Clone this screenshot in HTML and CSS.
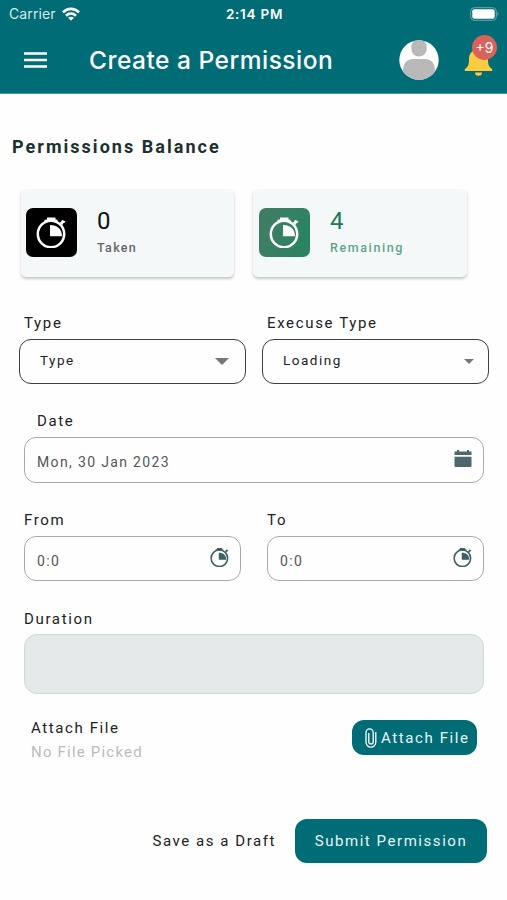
FILE: index.html
```html
<!DOCTYPE html>
<html lang="en">
<head>
<meta charset="utf-8">
<title>Create a Permission</title>
<link rel="stylesheet" href="styles.css">
</head>
<body>
<svg class="defs" aria-hidden="true">
  <symbol id="timer" viewBox="0 0 32 32">
    <circle cx="15" cy="18" r="13.200" fill="none" stroke="currentColor" stroke-width="2.500"/>
    <path d="M11 1.500h8.500v2l2 .3v2h-13v-2l2.500-.3zM23.500 6.500l1.500-.5.500-1.500 1-.5 3 1.500-.8 1.200-1.200.2-1 2zM14 9v11.300h12C26 13 21.500 9 14 9z" fill="currentColor"/>
  </symbol>
</svg>
<header class="header">
  <div class="status">
    <div class="carrier"><span>Carrier</span>
      <svg class="wifi" viewBox="0 0 18 14" fill="none" stroke="#fff" stroke-width="2.600"><path d="M1 5.300C5.500.7 12.500.7 17 5.300M4 8.700c3-2.800 7-2.800 10 0"/><path d="M9 13.700 6.100 10.800c1.700-1.500 4.100-1.500 5.800 0z" fill="#fff" stroke="none"/></svg>
    </div>
    <div class="clock">2:14 PM</div>
    <svg class="battery" viewBox="0 0 30 14"><rect x=".7" y=".7" width="25.600" height="12.600" rx="3.500" fill="none" stroke="#6da8ad" stroke-width="1"/><rect x="2.300" y="2.300" width="22.400" height="9.400" rx="2" fill="#fff"/><path d="M27.500 4.800q2 2.200 0 4.400z" fill="#6da8ad"/></svg>
  </div>
  <div class="appbar">
    <svg class="menu" viewBox="0 0 23 16"><path d="M0 1.500h23M0 8h23M0 14.500h23" stroke="#fff" stroke-width="2.400"/></svg>
    <h1>Create a Permission</h1>
    <svg class="avatar" viewBox="0 0 40 40"><defs><clipPath id="round"><circle cx="20" cy="20" r="19.700"/></clipPath></defs><g clip-path="url(#round)"><path fill="#fff" d="M0 0h40v40H0z"/><rect x="12.300" y="-1" width="15.400" height="17.500" rx="7.600" fill="#b9b9b9"/><path d="M4 32c0-8 3-13 10-13h12c7 0 10 5 10 13v8H4z" fill="#b9b9b9"/></g></svg>
    <div class="bell">
      <svg viewBox="0 0 28 32"><path d="M14 2.500a2 2 0 0 1 2 2v1c5 1 7.500 4.500 7.500 10 0 5.500 1 7.500 4.200 9.500v2H.3v-2c3.200-2 4.200-4 4.200-9.500 0-5.500 2.500-9 7.500-10v-1a2 2 0 0 1 2-2zM10.500 28.500h7a3.500 3.300 0 0 1-7 0z" fill="#fdcb3f"/></svg>
      <span class="badge">+9</span>
    </div>
  </div>
</header>
<main>
  <h2>Permissions Balance</h2>
  <section class="cards">
    <div class="card"><div class="tile"><svg><use href="#timer"/></svg></div><div class="stat"><b>0</b><span>Taken</span></div></div>
    <div class="card green"><div class="tile"><svg><use href="#timer"/></svg></div><div class="stat"><b>4</b><span>Remaining</span></div></div>
  </section>
  <section class="selects">
    <div><label>Type</label><div class="select"><span>Type</span><svg class="caret" viewBox="0 0 14 7"><path d="M0 0h14L7 7z" fill="#777"/></svg></div></div>
    <div><label>Execuse Type</label><div class="select"><span>Loading</span><svg class="caret small" viewBox="0 0 14 7"><path d="M0 0h14L7 7z" fill="#777"/></svg></div></div>
  </section>
  <section class="date">
    <label>Date</label>
    <div class="field"><span>Mon, 30 Jan 2023</span><svg class="calendar" viewBox="0 0 18 18"><path d="M3 0h2v1.500h8V0h2v1.500h2.500V5H.5V1.500H3zM.5 6.800h17V16q0 1-1 1h-15q-1 0-1-1z" fill="#4c686a"/></svg></div>
  </section>
  <section class="times">
    <div><label>From</label><div class="field"><span class="time">0:0</span><svg class="timer"><use href="#timer"/></svg></div></div>
    <div><label>To</label><div class="field"><span class="time">0:0</span><svg class="timer"><use href="#timer"/></svg></div></div>
  </section>
  <section class="duration"><label>Duration</label><div class="readonly"></div></section>
  <section class="attach">
    <div><div class="attach-title">Attach File</div><div class="none">No File Picked</div></div>
    <button class="attach-btn"><svg viewBox="0 0 12 20" fill="none" stroke="#fff" stroke-width="1.300"><path d="M10.800 4v10.300a4.900 4.900 0 0 1-9.800 0V4.500a3.600 3.600 0 0 1 7.200 0v9.200a2.200 2.200 0 0 1-4.400 0V5"/></svg><span>Attach File</span></button>
  </section>
  <footer><button class="draft">Save as a Draft</button><button class="submit">Submit Permission</button></footer>
</main>
</body>
</html>
```
FILE: styles.css
```css
* { box-sizing: border-box; }
body { margin: 0; width: 507px; height: 900px; overflow: hidden; background: #fefefe; color: #222; font-family: Roboto, sans-serif; }
svg { display: block; flex: none; }
button { border: 0; padding: 0; background: none; font: inherit; color: inherit; }
.defs { width: 0; height: 0; position: absolute; }
.header { height: 94px; background: #006c75; border-bottom: 1px solid #4b9aa1; color: #fff; font-family: Inter, sans-serif; }
.status { height: 27px; display: grid; grid-template-columns: 1fr auto 1fr; align-items: center; padding: 0 7px 0 9px; }
.carrier { display: flex; align-items: center; gap: 6px; font-size: 14px; letter-spacing: 0.1px; color: #d9e9ea; }
.wifi { width: 18px; height: 14px; }
.clock { font-size: 13.5px; font-weight: 600; letter-spacing: 0.75px; }
.battery { width: 30px; height: 14px; justify-self: end; }
.appbar { height: 65px; display: flex; align-items: center; padding: 0 13px 0 24px; }
.menu { width: 23px; height: 16px; }
h1 { margin: 0 auto 0 42px; font-size: 24.5px; font-weight: 500; line-height: 36px; letter-spacing: 0.5px; white-space: nowrap; }
.avatar { width: 40px; height: 40px; margin-right: 25px; }
.bell { width: 30px; height: 40px; position: relative; padding-top: 4px; }
.bell svg { width: 29px; height: 32px; }
.badge { position: absolute; left: 8px; top: -5px; width: 25px; height: 25px; border-radius: 50%; background: #d9635b; font-size: 14px; line-height: 25px; text-align: center; }
h2 { margin: 42px 0 0 12px; line-height: 22px; font-size: 18px; font-weight: 700; letter-spacing: 2.03px; color: #1c302f; }
.cards { display: grid; grid-template-columns: 213px 214px; gap: 19px; margin: 31px 0 0 21px; }
.card { height: 88px; display: flex; align-items: center; gap: 20px; padding: 0 0 2px 5px; border-radius: 5px; background: #f5f8f8; box-shadow: 0 2px 3px rgba(0,0,0,.22); }
.card.green { padding-left: 6px; }
.tile { width: 51px; height: 49px; border-radius: 7px; background: #000; color: #fff; display: grid; place-items: center; }
.tile svg { width: 32px; height: 32px; }
.stat b { display: block; font-size: 24px; line-height: 28px; font-weight: 400; color: #111; }
.stat span { display: block; margin-top: 4px; line-height: 18px; font-size: 12.5px; font-weight: 500; letter-spacing: 1.3px; color: #666; }
.green .stat span { color: #5fa68b; letter-spacing: 1.6px; }
.green .tile { background: linear-gradient(110deg, #437d64, #268461); }
.green b { color: #247a58; }
label { display: block; height: 20px; line-height: 20px; font-size: 15px; letter-spacing: 1.65px; color: #222; }
.selects { display: grid; grid-template-columns: 227px 227px; gap: 16px; margin: 36px 0 0 19px; }
.selects label { margin: 0 0 6px 5px; }
.select { height: 45px; display: flex; align-items: center; justify-content: space-between; border: 1.5px solid #3d3d42; border-radius: 12px; padding: 0 16px 4px 20px; font-size: 13.5px; letter-spacing: 1.5px; }
.caret { width: 14px; height: 7px; margin-top: 4px; }
.caret.small { width: 10px; height: 5px; margin-right: -2px; }
.date { margin: 27px 23px 0 24px; }
.date label { margin: 0 0 6px 13px; }
.field { height: 46px; display: flex; align-items: center; justify-content: space-between; border: 1.5px solid #aaa; border-radius: 12px; padding: 4px 11px 0 12px; font-size: 14px; letter-spacing: 1.35px; color: #555; }
.calendar { width: 18px; height: 18px; margin-top: -7px; }
.times { display: grid; grid-template-columns: 217px 217px; gap: 26px; margin: 27px 0 0 24px; }
.times .field { height: 45px; padding-right: 10px; }
.times label { margin-bottom: 6px; }
.timer { width: 20px; height: 20px; margin-top: -8px; color: #3f6062; }
.duration { margin: 28px 23px 0 24px; }
.readonly { height: 60px; margin-top: 5px; background: #e5e9ea; border: 1px solid #cfd7d7; border-radius: 13px; }
.attach { display: flex; justify-content: space-between; margin: 24px 30px 0 31px; height: 47px; font-size: 15px; letter-spacing: 1.6px; }
.attach-title { line-height: 20px; }
.none { margin-top: 4px; line-height: 20px; letter-spacing: 1.2px; color: #bbb; }
.attach-btn { display: flex; align-items: center; gap: 4px; width: 125px; height: 35px; margin-top: 2px; padding-left: 13px; background: #006c75; color: #e8f5f5; border-radius: 12px; letter-spacing: 1.6px; white-space: nowrap; }
.attach-btn svg { width: 12px; height: 20px; }
footer { display: flex; justify-content: flex-end; align-items: center; gap: 19px; margin: 54px 20px 0 0; font-size: 15px; letter-spacing: 1.55px; }
footer button { letter-spacing: inherit; white-space: nowrap; }
.submit { width: 192px; height: 44px; border-radius: 12px; background: #006c75; color: #e8f5f5; }
```
